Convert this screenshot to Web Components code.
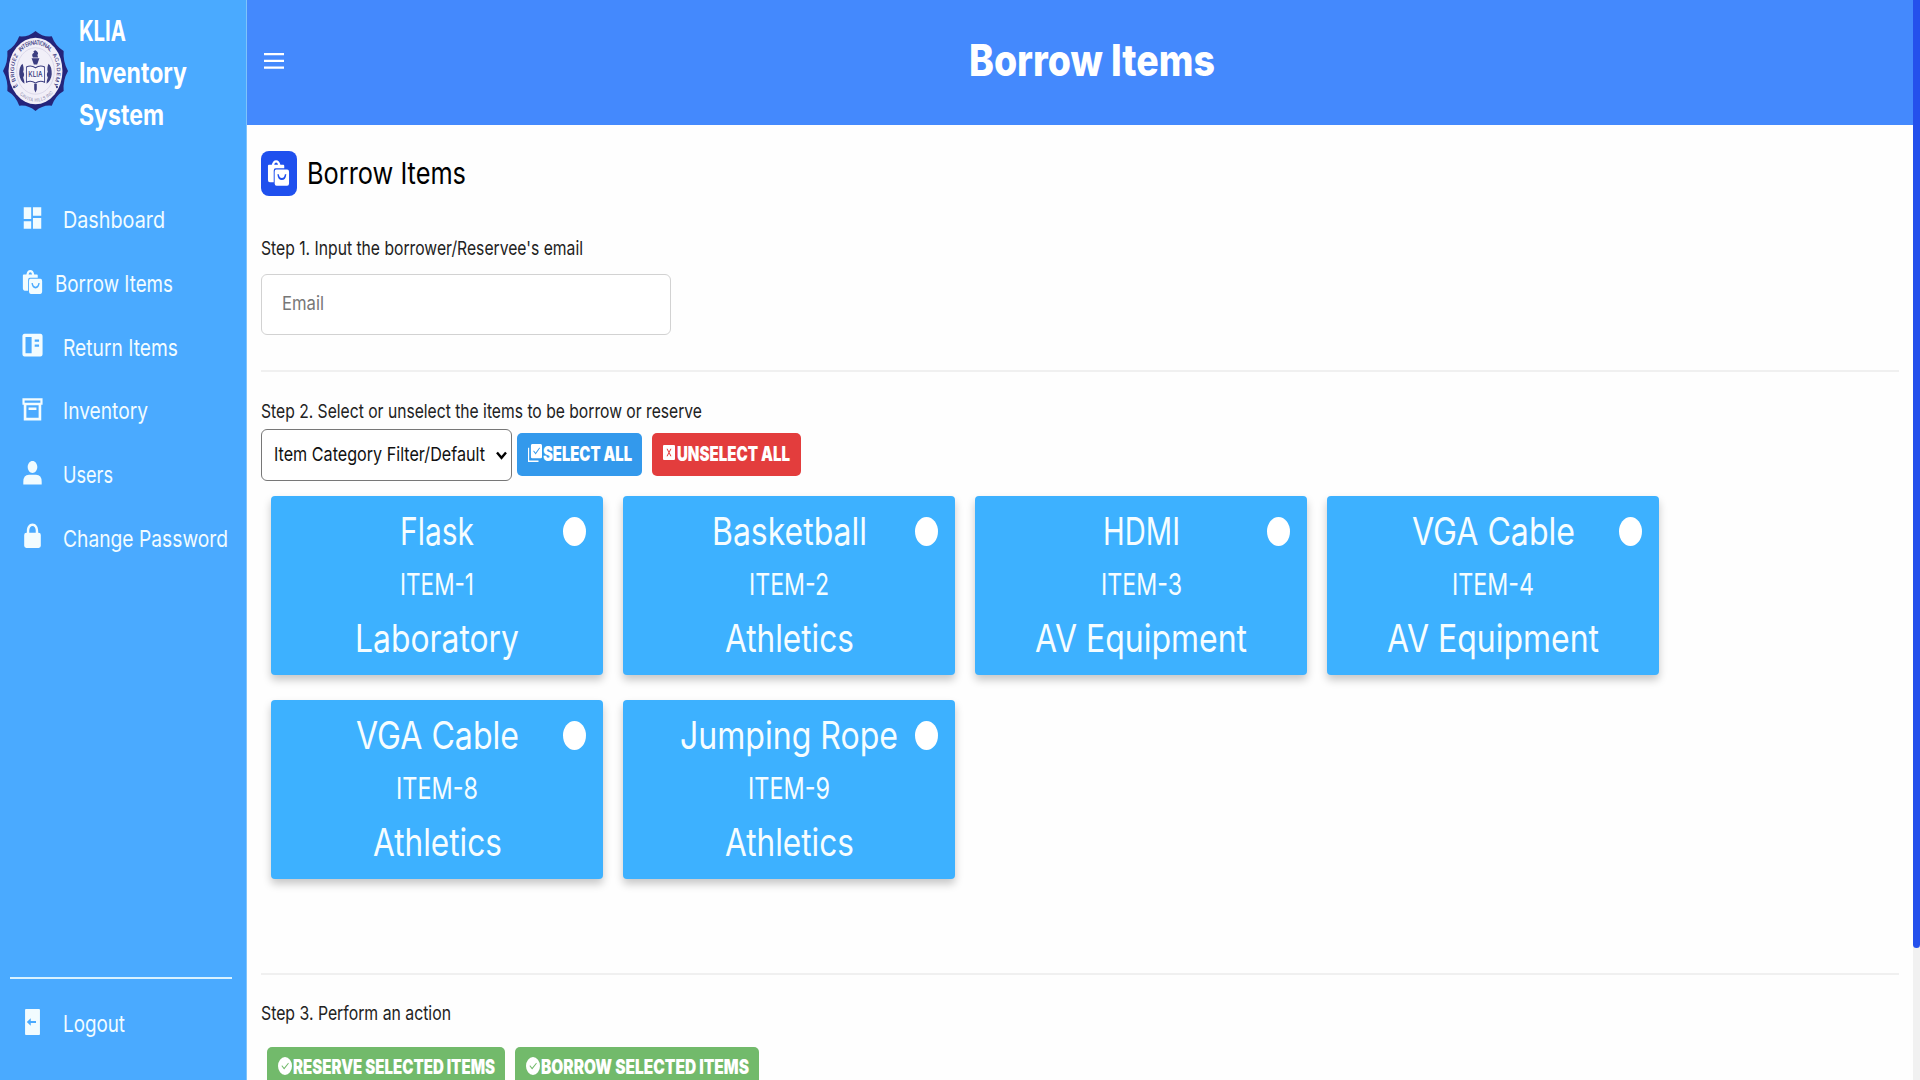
<!DOCTYPE html>
<html lang="en"><head><meta charset="utf-8"><title>KLIA Inventory System</title>
<style>
html,body{margin:0;height:100%;overflow:hidden;background:#fefefe}
body{font-family:Inter,"Liberation Sans",sans-serif}
</style></head><body>
<inventory-app></inventory-app>
<script>
const define=(name,html,setup)=>{
  const t=document.createElement('template');t.innerHTML=html;
  customElements.define(name,class extends HTMLElement{
    connectedCallback(){
      if(this.shadowRoot)return;
      this.attachShadow({mode:'open'}).append(t.content.cloneNode(true));
      if(setup)setup(this,this.shadowRoot);
    }
  });
};

/* Single line of text condensed to an exact width; w = width, s = font size */
define('fit-text',`<style>:host{display:block;flex:none;white-space:nowrap;line-height:1.2}
span{display:inline-block;transform-origin:0 50%}</style><span><slot></slot></span>`,(el,r)=>{
  const w=+el.getAttribute('w');
  el.style.fontSize=el.getAttribute('s')+'px';
  const sp=r.querySelector('span');
  const n=sp.getBoundingClientRect().width;
  sp.style.transform='scaleX('+w/n+')';
  el.style.width=w+'px';
});

const icons={
 dashboard:'<path d="M2 2H10.500V13H2ZM12.500 2H22V10H12.500ZM2 15H10.500V22H2ZM12.500 12H22V22H12.500Z"/>',
 bag:'<path fill-rule="evenodd" d="M1 6Q1 5 2 5H5Q6 1 9.500 1T14 5H17Q18 5 18 6V8H9Q7 8 7 10V20H3Q1 20 1 18ZM7.500 5H11.500Q11 3 9.500 3T7.500 5ZM9.500 9H21Q23 9 23 11V21Q23 23 21 23H10Q8 23 8 21V11Q8 9 9.500 9ZM10.800 13Q11.500 18 15.500 18T20.200 13H18.700Q18 16.300 15.500 16.300T12.300 13Z"/>',
 reader:'<path fill-rule="evenodd" d="M3 1.500H21Q23.500 1.500 23.500 4V20Q23.500 22.500 21 22.500H3Q.5 22.500 .5 20V4Q.5 1.500 3 1.500ZM4 4.500V19.500H11V4.500ZM14.500 7V9H19.500V7ZM14.500 11.500V13.500H19.500V11.500Z"/>',
 archive:'<path fill-rule="evenodd" d="M.5 2H23.500V8H22V22.500H2V8H.5ZM3 4.200V6.200H21V4.200ZM5 8.500V20H19V8.500ZM7.500 10.500H16.500V13H7.500Z"/>',
 user:'<path d="M12 1C15 1 17.500 3.500 17.500 6.500S15 12 12 12S6.500 9.500 6.500 6.500S9 1 12 1ZM1.500 22.500V20Q1.500 13.500 8 13.500H16Q22.500 13.500 22.500 20V22.500Z"/>',
 lock:'<path fill-rule="evenodd" d="M5.500 9V7.500C5.500 3.500 8 .5 12 .5S18.500 3.500 18.500 7.500V9H19Q21.500 9 21.500 11V21Q21.500 23 19 23H5Q2.500 23 2.500 21V11Q2.500 9 5 9ZM8.300 9H15.700V7C15.700 4.500 14 2.800 12 2.800S8.300 4.500 8.300 7Z"/>',
 door:'<path fill-rule="evenodd" d="M4.500 0H19.500Q20.500 0 20.500 1V23Q20.500 24 19.500 24H4.500Q3.500 24 3.500 23V1Q3.500 0 4.500 0ZM5.500 12L10 8.500V11H16V13H10V15.500Z"/>',
 menu:'<path d="M0 2.500H24V5.200H0ZM0 10.500H24V13.200H0ZM0 18.500H24V21.200H0Z"/>',
 checks:'<path fill-rule="evenodd" d="M7 0H22Q24 0 24 2V17Q24 19 22 19H7Q5 19 5 17V2Q5 0 7 0ZM9 9.500L13 14L20.500 5.500L19.500 4.500L13 11.500L10 8.500ZM0 5H2V22H18V24H0Z"/>',
 cross:'<path fill-rule="evenodd" d="M2 0H22Q24 0 24 2V22Q24 24 22 24H2Q0 24 0 22V2Q0 0 2 0ZM7 6L11 12L7 18H9.200L12 13.600L14.800 18H17L13 12L17 6H14.800L12 10.400L9.200 6Z"/>',
 tick:'<path fill-rule="evenodd" d="M12 0A12 12 0 1 1 12 24A12 12 0 1 1 12 0ZM6 12L10.500 16.500L18.500 8.500L17.500 7.500L10.500 14.200L7 11Z"/>'
};
/* Icon stretched to its own box; w, h = size */
define('app-icon',`<style>:host{display:block;flex:none}svg{display:block;fill:currentColor;width:100%;height:100%}</style><svg viewBox="0 0 24 24" preserveAspectRatio="none"></svg>`,(el,r)=>{
  r.querySelector('svg').innerHTML=icons[el.getAttribute('name')];
  el.style.width=el.getAttribute('w')+'px';el.style.height=el.getAttribute('h')+'px';
});

define('school-seal',`<style>:host{display:block;width:65px;height:80px;flex:none}svg{display:block;width:100%;height:100%}text{font-family:Inter,sans-serif;fill:#33347c}</style>
<svg viewBox="0 0 100 100" preserveAspectRatio="none">
<path id="edge" fill="#24247a"/><circle cx="50" cy="50" r="41.500" fill="#f1eff8"/><circle cx="50" cy="50" r="29" fill="none" stroke="#c5c2dc" stroke-width=".7"/>
<defs><path id="left" d="M23 68.900A33 33 0 0 1 24 29.700"/><path id="top" d="M27.100 26.300A33 33 0 0 1 72.900 26.300"/><path id="right" d="M76 29.700A33 33 0 0 1 77 68.900"/><path id="low" d="M22 76A38 38 0 0 0 78 76"/></defs>
<g font-size="7.500" font-weight="500"><text><textPath href="#left" textLength="41">E BRIGUEZ</textPath></text>
<text><textPath href="#top" textLength="50">INTERNATIONAL</textPath></text>
<text><textPath href="#right" textLength="41">ACADEMY</textPath></text></g>
<text font-size="6" style="fill:#8a88ad"><textPath href="#low" textLength="56" startOffset="5">CAVITA HILLS INC</textPath></text>
<g fill="#3b3d80"><circle cx="17" cy="70" r="1.500"/><circle cx="83" cy="70" r="1.500"/><path d="M47.500 42L44 34H56L52.500 42ZM46 33Q43 29 48 27Q45 25 50 24Q56 27 53 30L54 33ZM48 66H52V73L50 77L48 73Z"/>
<path d="M30 41Q25 44 25 54Q26 62 33 66Q33 62 31 58Q34 55 31 51Q33 47 30 41ZM70 41Q75 44 75 54Q74 62 67 66Q67 62 69 58Q66 55 69 51Q67 47 70 41Z"/></g>
<path d="M36 45Q43 42 50 46Q57 42 64 45V64Q57 61 50 65Q43 61 36 64Z" fill="#f6f5fb" stroke="#3b3d80" stroke-width="1.300"/>
<text x="39" y="57" font-size="9" font-weight="500" textLength="22" lengthAdjust="spacingAndGlyphs">KLIA</text></svg>`,(el,r)=>{
  let d='';
  const p=(a,q)=>(50+q*Math.sin(a)).toFixed(1)+' '+(50-q*Math.cos(a)).toFixed(1);
  for(let i=0;i<12;i++){
    const a=i*Math.PI/6;
    if(!i)d+='M'+p(0,50);
    d+='Q'+p(a+.26,43.5)+' '+p(a+Math.PI/6,50);
  }
  r.querySelector('#edge').setAttribute('d',d+'Z');
});

customElements.define('side-link',class extends HTMLElement{
  connectedCallback(){
    if(this.shadowRoot)return;
    const g=this.getAttribute('gap')||20;
    this.attachShadow({mode:'open'}).innerHTML=`<style>:host{display:flex;height:63.700px;align-items:center;padding-left:22px;color:#f2fcff;box-sizing:border-box}
app-icon{margin-bottom:5px}fit-text{margin-left:${g}px}</style><app-icon name="${this.getAttribute('icon')}" w="21" h="26"></app-icon><fit-text s="23.500" w="${this.getAttribute('w')}">${this.textContent}</fit-text>`;
  }
});

define('side-bar',`<style>:host{display:flex;flex-direction:column;width:247px;flex:none;box-sizing:border-box;border-right:1px solid #7fc3fb;background:#4aaaff;color:#fff}
.brand{display:flex;padding:10px 0 0 3px;height:179px;box-sizing:border-box}
school-seal{margin-top:20.500px}.name{margin-left:11px;font-weight:700;display:flex;flex-direction:column}
.name fit-text{line-height:42px}nav{display:block;padding-top:9.500px}
.foot{margin-top:auto;height:103px;padding-left:10px;box-sizing:border-box}.foot i{display:block;width:222px;height:1.500px;background:#d9f2ff;margin-bottom:14px}
.foot side-link{margin-left:-10px}</style>
<div class="brand"><school-seal></school-seal><div class="name"><fit-text s="28" w="47">KLIA</fit-text><fit-text s="28" w="108">Inventory</fit-text><fit-text s="28" w="85">System</fit-text></div></div>
<nav><side-link icon="dashboard" w="102">Dashboard</side-link><side-link icon="bag" gap="12" w="118">Borrow Items</side-link><side-link icon="reader" w="115">Return Items</side-link><side-link icon="archive" w="85">Inventory</side-link><side-link icon="user" w="50">Users</side-link><side-link icon="lock" w="165">Change Password</side-link></nav>
<div class="foot"><i></i><side-link icon="door" w="62">Logout</side-link></div>`);

define('top-bar',`<style>:host{display:flex;height:124.500px;flex:none;align-items:center;background:#4489fd;color:#fff;padding:0 0 3px 17px;box-sizing:border-box}
div{flex:1;display:flex;justify-content:center;padding-right:13px}fit-text{font-weight:800}</style>
<app-icon name="menu" w="20" h="20"></app-icon><div><fit-text s="44" w="246">Borrow Items</fit-text></div>`);

customElements.define('action-button',class extends HTMLElement{
  connectedCallback(){
    if(this.shadowRoot)return;
    const a=n=>this.getAttribute(n);
    this.attachShadow({mode:'open'}).innerHTML=`<style>:host{display:flex;align-items:center;flex:none;box-sizing:border-box;height:43px;width:${a('bw')}px;padding-left:${a('pad')||11}px;border-radius:5px;background:${a('bg')};color:#fff;font-weight:900}
app-icon{margin:0 ${a('gap')||1}px 4px 0}</style><app-icon name="${a('icon')}" w="${a('iw')}" h="${a('ih')}"></app-icon><fit-text s="19.500" w="${a('w')}">${this.textContent}</fit-text>`;
  }
});

customElements.define('item-card',class extends HTMLElement{
  connectedCallback(){
    if(this.shadowRoot)return;
    const L=['name','code','kind'].map(k=>this.getAttribute(k).split('|'));
    this.attachShadow({mode:'open'}).innerHTML=`<style>:host{display:flex;flex-direction:column;align-items:center;position:relative;width:332px;height:178.500px;box-sizing:border-box;padding-top:8.500px;background:#3db1ff;color:#f6fdff;border-radius:4px;box-shadow:0 5px 9px rgba(0,0,0,.22)}
fit-text{line-height:53.500px}i{position:absolute;right:17px;top:21px;width:23px;height:29px;border-radius:50%;background:#fff}</style>
<fit-text s="38" w="${L[0][1]}">${L[0][0]}</fit-text><fit-text s="30" w="${L[1][1]}">${L[1][0]}</fit-text><fit-text s="38" w="${L[2][1]}">${L[2][0]}</fit-text><i></i>`;
  }
});

define('email-field',`<style>:host{display:flex;align-items:center;width:410px;height:61px;box-sizing:border-box;border:1.500px solid #d2d2d2;border-radius:6px;padding:1px 0 0 20px;background:#fff;color:#777}</style><fit-text s="19" w="42">Email</fit-text>`);
define('category-select',`<style>:host{display:flex;align-items:center;width:251px;height:52px;box-sizing:border-box;border:1.500px solid #777;border-radius:6px;padding:1px 0 0 12px;background:#fff;color:#111}svg{margin-left:11px}</style><fit-text s="19" w="211">Item Category Filter/Default</fit-text><svg width="11" height="9" viewBox="0 0 11 9"><path d="M1 1.500L5.500 6.800L10 1.500" fill="none" stroke="#000" stroke-width="2.400"/></svg>`);

define('borrow-page',`<style>:host{display:flex;flex-direction:column;flex:1;padding:26.500px 14px 0 14px;color:#222;overflow:hidden}.head,.tools,.grid,.acts,email-field{flex:none}
.head{display:flex;align-items:center;height:45px;color:#000}.head fit-text{margin-bottom:2px}.tile{display:flex;align-items:center;justify-content:center;width:35.500px;height:45px;border-radius:8px;background:#1f50ee;color:#fff;margin-right:10px}
.tile app-icon{margin-bottom:2px}.step{line-height:24px}hr{margin:0;border:0;height:2px;background:#f0f0f0;flex:none}
.tools{display:flex;align-items:center;height:52px;margin-top:4.500px}.tools>*+*{margin-left:5px}.tools>:last-child{margin-left:10px}
.grid{display:grid;grid-template-columns:repeat(4,332px);column-gap:20px;row-gap:25.500px;padding:15.500px 0 0 10px}
.acts{display:flex;gap:10px;padding:20.500px 0 0 6px}</style>
<div class="head"><div class="tile"><app-icon name="bag" w="23" h="28"></app-icon></div><fit-text s="30" w="159">Borrow Items</fit-text></div>
<fit-text class="step" style="margin-top:40.500px" s="19" w="322">Step 1. Input the borrower/Reservee's email</fit-text>
<email-field style="margin-top:13px"></email-field>
<hr style="margin-top:35px">
<fit-text class="step" style="margin-top:28.500px" s="19" w="441">Step 2. Select or unselect the items to be borrow or reserve</fit-text>
<div class="tools"><category-select></category-select><action-button icon="checks" iw="14" ih="18" bw="125" w="89" bg="#3399ec">SELECT ALL</action-button><action-button icon="cross" iw="12" ih="15" gap="2" bw="149" w="113" bg="#e33d3d">UNSELECT ALL</action-button></div>
<div class="grid">
<item-card name="Flask|74" code="ITEM-1|74" kind="Laboratory|164"></item-card>
<item-card name="Basketball|155" code="ITEM-2|80" kind="Athletics|129"></item-card>
<item-card name="HDMI|77" code="ITEM-3|81" kind="AV Equipment|212"></item-card>
<item-card name="VGA Cable|163" code="ITEM-4|82" kind="AV Equipment|212"></item-card>
<item-card name="VGA Cable|163" code="ITEM-8|82" kind="Athletics|129"></item-card>
<item-card name="Jumping Rope|218" code="ITEM-9|82" kind="Athletics|129"></item-card>
</div>
<hr style="margin-top:94px">
<fit-text class="step" style="margin-top:27.500px" s="19" w="190">Step 3. Perform an action</fit-text>
<div class="acts"><action-button icon="tick" iw="14" ih="18" bw="238" w="202" bg="#72ba6b">RESERVE SELECTED ITEMS</action-button><action-button icon="tick" iw="14" ih="18" bw="244" w="208" bg="#72ba6b">BORROW SELECTED ITEMS</action-button></div>`);

define('scroll-rail',`<style>:host{display:block;width:7px;flex:none;background:#f1f1f1}i{display:block;height:948px;border-radius:0 0 4px 4px;background:#2450ec}</style><i></i>`);

define('inventory-app',`<style>:host{display:flex;width:1920px;height:1080px;overflow:hidden}main{display:flex;flex-direction:column;width:1666px;flex:none}</style>
<side-bar></side-bar><main><top-bar></top-bar><borrow-page></borrow-page></main><scroll-rail></scroll-rail>`);
</script></body></html>
